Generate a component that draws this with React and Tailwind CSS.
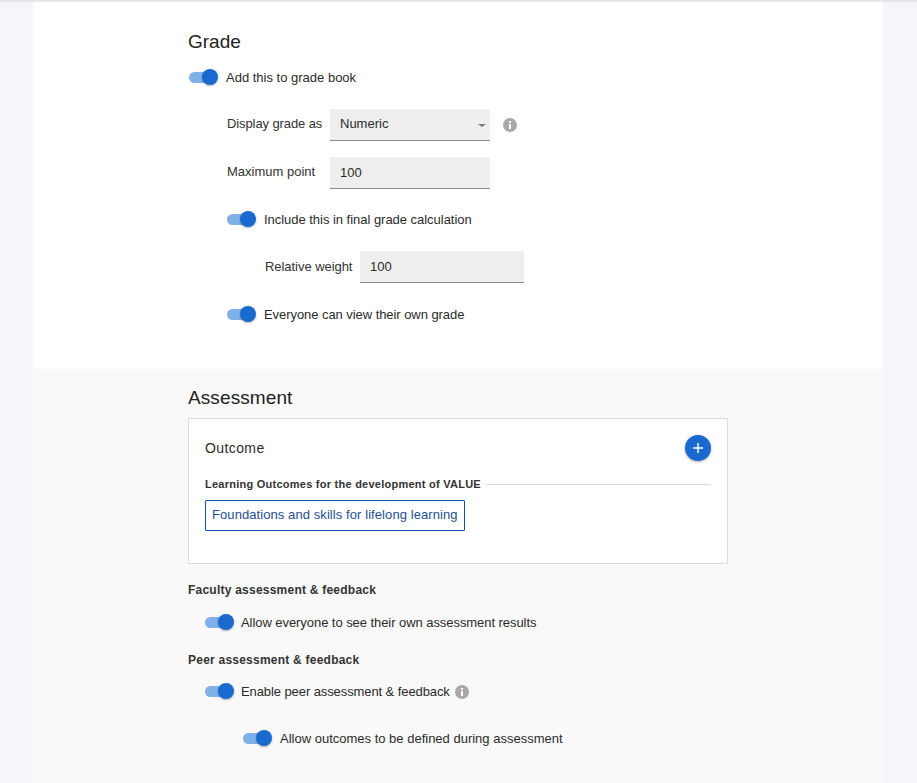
import React from "react";

const Toggle = () => (
  <div className="relative w-[29px] h-[20px] shrink-0">
    <div className="absolute left-0 top-[4px] w-[26px] h-[11px] rounded-full bg-[#7fb0e8]" />
    <div className="absolute right-0 top-[1px] w-[16px] h-[16px] rounded-full bg-[#1a69cf] shadow-[0_1px_2px_rgba(0,0,0,0.3)]" />
  </div>
);

const InfoIcon = ({ className }) => (
  <svg viewBox="0 0 14 14" className={className}>
    <circle cx="7" cy="7" r="7" fill="#a8a8a8" />
    <rect x="6" y="6" width="2" height="5" fill="#fff" />
    <rect x="6" y="3" width="2" height="2" fill="#fff" />
  </svg>
);

const ToggleRow = ({ label, className = "", labelClass = "", children }) => (
  <div className={`flex items-center gap-[8px] ${className}`}>
    <Toggle />
    <span className={`text-[13px] leading-[20px] text-[#2b2b2b] ${labelClass}`}>{label}</span>
    {children}
  </div>
);

const Field = ({ value, width, valueClass = "", children }) => (
  <div
    className={`flex items-center justify-between h-[32px] pl-[10px] pr-[4px] bg-[#eeeeee] border-b border-[#8a8a8a] rounded-t-[2px] text-[13px] text-[#2b2b2b] ${width}`}
  >
    <span className={valueClass}>{value}</span>
    {children}
  </div>
);

export default function App() {
  return (
    <div className="relative h-[783px] overflow-hidden bg-[#f4f6fb] font-['Liberation_Sans',Arial,sans-serif]">
      <div className="absolute inset-x-0 top-0 h-[3px] bg-gradient-to-b from-[#dcdde0] to-transparent" />
      <div className="mx-[33px] w-[850px]">
        <section className="bg-white h-[369px] pl-[155px] pt-[30px]">
          <h2 className="text-[19px] leading-[24px] text-[#222222]">Grade</h2>
          <ToggleRow label="Add this to grade book" className="mt-[14px] ml-[1px]" />

          <div className="mt-[21px] ml-[39px] flex items-center h-[32px]">
            <span className="w-[103px] text-[13px] tracking-[-0.1px] text-[#333333] -mt-[2px]">Display grade as</span>
            <Field value="Numeric" width="w-[160px]" valueClass="-mt-[2px]">
              <span className="mt-[1px] w-0 h-0 border-x-[4px] border-x-transparent border-t-[3px] border-t-[#777777]" />
            </Field>
            <InfoIcon className="w-[14px] h-[14px] ml-[13px]" />
          </div>

          <div className="mt-[16px] ml-[39px] flex items-center h-[32px]">
            <span className="w-[103px] text-[13px] text-[#333333] -mt-[3px]">Maximum point</span>
            <Field value="100" width="w-[160px]" />
          </div>

          <ToggleRow
            label="Include this in final grade calculation"
            className="mt-[21px] ml-[39px]"
            labelClass="tracking-[-0.03px]"
          />

          <div className="mt-[21px] ml-[77px] flex items-center h-[32px]">
            <span className="w-[95px] text-[13px] tracking-[-0.05px] text-[#333333]">Relative weight</span>
            <Field value="100" width="w-[164px]" />
          </div>

          <ToggleRow
            label="Everyone can view their own grade"
            className="mt-[22px] ml-[39px]"
            labelClass="tracking-[-0.06px]"
          />
        </section>

        <section className="bg-[#f9f9f9] h-[414px] pl-[155px] pt-[17px]">
          <h2 className="text-[19px] leading-[24px] tracking-[0.1px] text-[#222222]">Assessment</h2>

          <div className="mt-[8px] w-[540px] h-[146px] bg-white border border-[#dcdcdc] pl-[16px] pr-[16px] pt-[16px]">
            <div className="flex items-center justify-between h-[26px]">
              <span className="text-[14px] tracking-[0.4px] text-[#2b2b2b]">Outcome</span>
              <button className="w-[26px] h-[26px] rounded-full bg-[#1a69cf] shadow-[0_1px_3px_rgba(0,0,0,0.3)] flex items-center justify-center">
                <svg viewBox="0 0 10 10" className="w-[10px] h-[10px]">
                  <path d="M5 0v10M0 5h10" stroke="#fff" strokeWidth="1.5" />
                </svg>
              </button>
            </div>
            <div className="mt-[15px] flex items-center gap-[5px] h-[16px]">
              <span className="text-[11px] font-bold tracking-[0.25px] text-[#333333] whitespace-nowrap">
                Learning Outcomes for the development of VALUE
              </span>
              <div className="flex-1 h-px bg-[#dcdcdc]" />
            </div>
            <div className="mt-[8px] inline-flex items-center h-[31px] px-[6px] pb-[2px] border border-[#0b55a8] rounded-[1px] text-[13px] tracking-[0.08px] text-[#25508f]">
              Foundations and skills for lifelong learning
            </div>
          </div>

          <h3 className="mt-[18px] text-[12px] leading-[16px] font-bold text-[#333333] tracking-[0.23px]">
            Faculty assessment &amp; feedback
          </h3>
          <ToggleRow
            label="Allow everyone to see their own assessment results"
            className="mt-[15px] ml-[17px] !gap-[7px]"
            labelClass="tracking-[-0.06px]"
          />

          <h3 className="mt-[19px] text-[12px] leading-[16px] font-bold text-[#333333] tracking-[0.23px]">
            Peer assessment &amp; feedback
          </h3>
          <ToggleRow
            label="Enable peer assessment & feedback"
            className="mt-[14px] ml-[17px] !gap-[7px]"
            labelClass="tracking-[-0.09px]"
          >
            <InfoIcon className="w-[14px] h-[14px] -ml-[2px]" />
          </ToggleRow>
          <ToggleRow
            label="Allow outcomes to be defined during assessment"
            className="mt-[27px] ml-[55px]"
          />
        </section>
      </div>
    </div>
  );
}
